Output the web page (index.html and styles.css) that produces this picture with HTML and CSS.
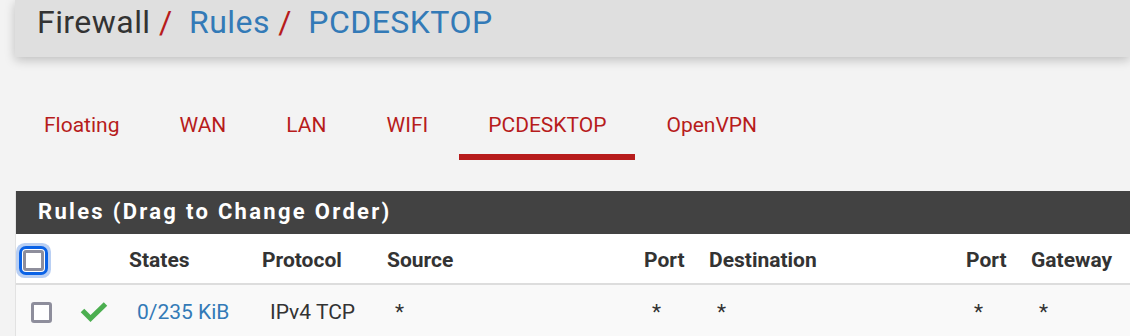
FILE: index.html
```html
<!DOCTYPE html>
<html>
<head>
  <title>Firewall: Rules: PCDESKTOP</title>
  <link rel="stylesheet" href="styles.css">
</head>
<body>
  <div class="page-header">
    <h1 class="breadcrumb">
      <span>Firewall</span> <span class="sep">/</span>
      <a href="#">Rules</a> <span class="sep">/</span>
      <a href="#">PCDESKTOP</a>
    </h1>
  </div>

  <ul class="tabs">
    <li><a href="#">Floating</a></li>
    <li><a href="#">WAN</a></li>
    <li><a href="#">LAN</a></li>
    <li><a href="#">WIFI</a></li>
    <li class="active"><a href="#">PCDESKTOP</a></li>
    <li><a href="#">OpenVPN</a></li>
  </ul>

  <div class="panel">
    <div class="panel-heading">Rules (Drag to Change Order)</div>
    <table class="rules">
      <colgroup>
        <col class="c-sel"><col class="c-icon"><col class="c-states"><col class="c-proto">
        <col class="c-src"><col class="c-port"><col class="c-dst"><col class="c-port"><col>
      </colgroup>
      <thead>
        <tr>
          <th class="sel"><span class="box focus"></span></th>
          <th></th>
          <th>States</th>
          <th>Protocol</th>
          <th>Source</th>
          <th>Port</th>
          <th>Destination</th>
          <th>Port</th>
          <th>Gateway</th>
        </tr>
      </thead>
      <tbody>
        <tr>
          <td class="sel"><span class="box"></span></td>
          <td class="icon">
            <svg width="28" height="22" viewBox="0 0 28 22"><path d="M2.5 9.5 L10.5 17.5 L25.5 3" fill="none" stroke="#4caf50" stroke-width="5" stroke-linejoin="miter"/></svg>
          </td>
          <td><a href="#">0/235 KiB</a></td>
          <td>IPv4 TCP</td>
          <td>*</td>
          <td>*</td>
          <td>*</td>
          <td>*</td>
          <td>*</td>
        </tr>
      </tbody>
    </table>
  </div>
</body>
</html>
```

FILE: styles.css
```css
body {
  margin: 0;
  font-family: Roboto, sans-serif;
  background-color: #f3f3f3;
  color: #333;
  overflow: hidden;
}
a {
  color: #337ab7;
  text-decoration: none;
}
.page-header {
  margin-left: 15px;
  height: 57px;
  background-color: #dfdfdf;
  box-shadow: 0 3px 10px rgba(0, 0, 0, 0.22);
}
.breadcrumb {
  margin: 0;
  padding-left: 22px;
  padding-top: 3px;
  font-size: 32px;
  font-weight: 400;
  line-height: 38px;
  letter-spacing: 0.45px;
  color: #333;
  white-space: nowrap;
}
.sep {
  color: #b71c1c;
  margin-right: 8px;
}
.tabs {
  list-style: none;
  margin: 0;
  margin-top: 48px;
  padding: 0;
  padding-left: 15px;
  display: flex;
}
.tabs li {
  padding: 6px 29px 0;
  margin-right: 2px;
  height: 55px;
  box-sizing: border-box;
}
.tabs li a {
  color: #b71c1c;
  font-size: 21px;
  line-height: 28px;
}
.tabs li.active {
  border-bottom: 6px solid #b71c1c;
}
.panel {
  margin-left: 15px;
  margin-top: 31px;
  background-color: white;
  border-left: 1px solid #e2e2e2;
}
.panel-heading {
  background-color: #424242;
  color: white;
  height: 43px;
  line-height: 42px;
  padding-left: 22px;
  font-size: 22px;
  font-weight: 700;
  letter-spacing: 2.3px;
}
.rules {
  width: 100%;
  border-collapse: collapse;
  table-layout: fixed;
}
.c-sel { width: 46px; }
.c-icon { width: 59px; }
.c-states { width: 133px; }
.c-proto { width: 125px; }
.c-src { width: 257px; }
.c-port { width: 65px; }
.c-dst { width: 257px; }
.rules th {
  text-align: left;
  font-size: 21px;
  font-weight: 700;
  height: 46px;
  padding: 3px 0 0 8px;
  border-bottom: 2px solid #dddddd;
}
.rules td {
  background-color: #f9f9f9;
  font-size: 21px;
  height: 50px;
  padding: 0 0 0 16px;
  border-bottom: 1px solid #dddddd;
}
.rules th.sel {
  padding-left: 7px;
}
.rules td.sel {
  padding-left: 15px;
}
.rules td.icon {
  padding-left: 18px;
  padding-top: 4px;
}
.box {
  display: block;
  width: 15px;
  height: 15px;
  border: 3px solid #8e8e9c;
  border-radius: 3px;
  background-color: white;
}
.box.focus {
  box-shadow: 0 0 0 1px white, 0 0 0 4px #0a62e6, 0 0 0 7px #b9cff3;
  border-radius: 3px;
}
```
